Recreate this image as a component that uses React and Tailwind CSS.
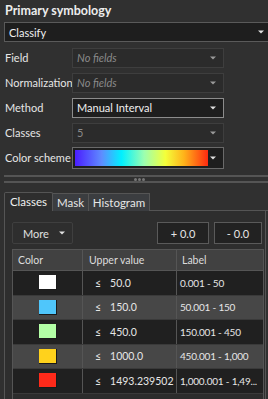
import React from 'react';

const Caret = ({ dim }) => (
  <svg width="6" height="4" viewBox="0 0 6 4" className="shrink-0">
    <path d="M0 0.5h6L3 3.5z" fill={dim ? '#9a9a9a' : '#e0e0e0'} />
  </svg>
);

const Select = ({ value, italic, disabled, strong, className = '' }) => (
  <div
    className={`flex items-center justify-between pl-[4px] pr-[7px] border ${
      strong
        ? 'bg-[#1e1e1e] border-[#8c8c8c] text-[#f0f0f0]'
        : disabled
        ? 'bg-[#2b2b2b] border-[#3e3e3e] text-[#8a8a8a]'
        : 'bg-[#1e1e1e] border-[#5a5a5a] text-[#f0f0f0]'
    } ${className}`}
  >
    <span className={italic ? 'italic' : ''}>{value}</span>
    <Caret dim={disabled} />
  </div>
);

const Row = ({ label, children }) => (
  <div className="flex items-center h-[25px]">
    <div className="w-[72px] pl-[5px] text-[#e6e6e6] whitespace-nowrap">{label}</div>
    {children}
  </div>
);

const classes = [
  { color: '#ffffff', value: '50.0', label: '0.001 - 50' },
  { color: '#4fc6fb', value: '150.0', label: '50.001 - 150' },
  { color: '#b3ffa6', value: '450.0', label: '150.001 - 450' },
  { color: '#ffd21c', value: '1000.0', label: '450.001 - 1,000' },
  { color: '#ff2a1a', value: '1493.239502', label: '1,000.001 - 1,49...' },
];

export default function App() {
  return (
    <div
      className="w-[268px] h-[399px] bg-[#303030] overflow-hidden text-[11px] leading-none"
      style={{ fontFamily: 'Lato, "Noto Sans", sans-serif' }}
    >
      <div className="pl-[5px] pt-[5px] h-[22px] text-[12.5px] font-bold text-[#ececec]">Primary symbology</div>

      <Select value="Classify" className="ml-[4px] w-[268px] h-[20px]" />

      <div className="pt-[3px]">
        <Row label="Field">
          <Select value="No fields" italic disabled className="w-[152px] h-[20px]" />
        </Row>
        <Row label="Normalization">
          <Select value="No fields" italic disabled className="w-[152px] h-[20px]" />
        </Row>
        <Row label="Method">
          <Select value="Manual Interval" strong className="w-[152px] h-[20px]" />
        </Row>
        <Row label="Classes">
          <Select value="5" disabled className="w-[152px] h-[20px]" />
        </Row>
        <Row label="Color scheme">
          <div className="flex items-center justify-between w-[152px] h-[22px] border border-[#6a6a6a] bg-[#1e1e1e] pl-[2px] pr-[7px]">
            <div
              className="h-[16px] w-[133px]"
              style={{
                background:
                  'linear-gradient(to right, #4a1dff 0%, #5f8cff 20%, #00f0ff 35%, #9cffb0 52%, #f4ff3a 68%, #ffb21a 82%, #ff2a10 100%)',
              }}
            />
            <Caret />
          </div>
        </Row>
      </div>

      <div className="relative mt-[5px] ml-[4px] h-[8px] border-t-2 border-b-2 border-[#555555]">
        <div className="absolute left-[130px] top-[1px] flex gap-[1px]">
          <span className="w-[3px] h-[3px] rounded-full bg-[#777777]" />
          <span className="w-[3px] h-[3px] rounded-full bg-[#777777]" />
          <span className="w-[3px] h-[3px] rounded-full bg-[#777777]" />
        </div>
      </div>

      <div className="ml-[4px] mt-[9px]">
        <div className="flex h-[19px] text-[11.5px]">
          <div className="w-[49px] flex items-center justify-center border border-b-0 border-[#555555] bg-[#2e2e2e] text-[#f0f0f0] rounded-t-[2px]">Classes</div>
          <div className="w-[36px] flex items-center justify-center border-t border-r border-[#555555] bg-[#3b3d40] text-[#e6e6e6] mt-[1px]">Mask</div>
          <div className="w-[61px] flex items-center justify-center border-t border-r border-[#555555] bg-[#3b3d40] text-[#e6e6e6] mt-[1px]">Histogram</div>
          <div className="flex-1 border-b border-[#555555]" />
        </div>
        <div className="w-[262px] border-l border-r border-[#555555] bg-[#2e2e2e] pl-[7px] pt-[11px] h-[200px]">
          <div className="flex items-center">
            <div className="flex items-center justify-between w-[61px] h-[22px] border border-[#3f3f3f] rounded-[2px] pl-[10px] pr-[7px] text-[#e0e0e0]">
              <span>More</span>
              <Caret />
            </div>
            <div className="ml-auto mr-[3px] flex gap-[5px]">
              <div className="w-[52px] h-[22px] flex items-center justify-center border border-[#5a5a5a] bg-[#222222] text-[#e6e6e6]">+ 0.0</div>
              <div className="w-[48px] h-[22px] flex items-center justify-center border border-[#5a5a5a] bg-[#222222] text-[#e6e6e6]">- 0.0</div>
            </div>
          </div>

          <div className="mt-[5px] mr-[1px] border border-[#555555] bg-[#2c2c2c] h-[160px] text-[10.5px]">
            <div className="grid grid-cols-[70px_94px_1fr] h-[21px] bg-[#414141] text-[#dcdcdc] border-b border-[#555555]">
              <div className="flex items-center pl-[5px] border-r border-[#555555]">Color</div>
              <div className="flex items-center pl-[6px] border-r border-[#555555]">Upper value</div>
              <div className="flex items-center pl-[5px]">Label</div>
            </div>
            {classes.map((c, i) => (
              <div
                key={c.value}
                className={`grid grid-cols-[70px_94px_1fr] h-[24.5px] text-[#e6e6e6] border-b border-[#3a3a3a] ${
                  i % 2 === 0 ? 'bg-[#202020]' : 'bg-[#474747]'
                }`}
              >
                <div className="flex items-center justify-center border-r border-[#555555]">
                  <div className="w-[18px] h-[15px] border-r border-b border-[#1a1a1a]" style={{ background: c.color }} />
                </div>
                <div className="flex items-center pl-[12px] gap-[9px] border-r border-[#555555]">
                  <span>≤</span>
                  <span>{c.value}</span>
                </div>
                <div className="flex items-center pl-[3px] whitespace-nowrap text-[10px] tracking-[-0.2px]">{c.label}</div>
              </div>
            ))}
          </div>
        </div>
      </div>
    </div>
  );
}
